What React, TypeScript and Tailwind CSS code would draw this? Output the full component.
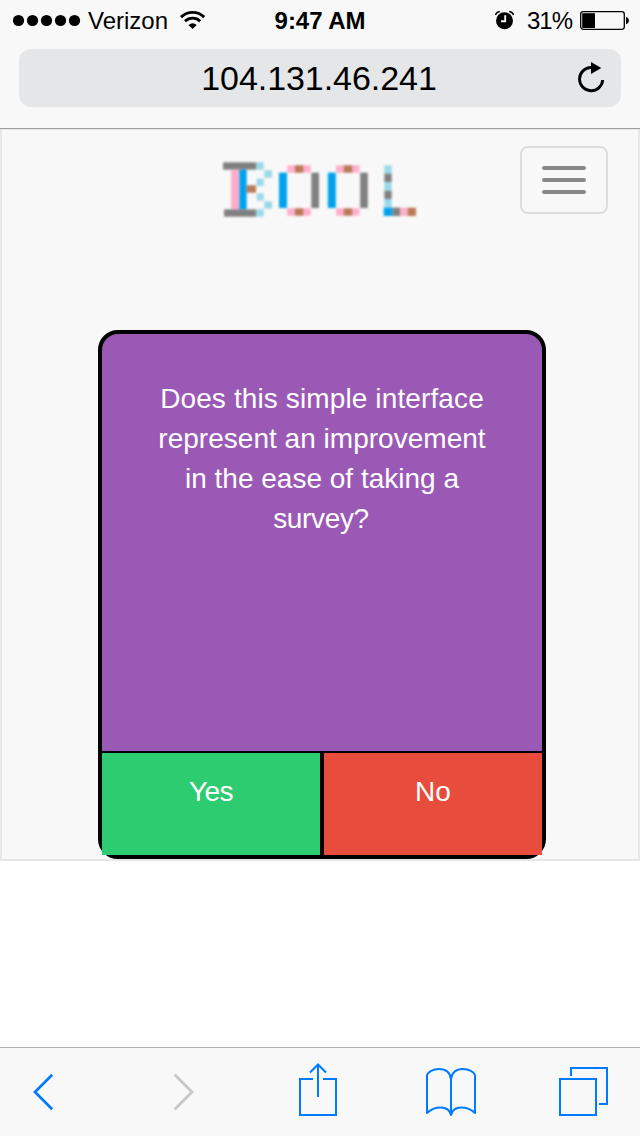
import React from 'react';

const GRAY = '#808080';
const PINK = '#ffaecb';
const BLUE = '#00a2ed';
const SKY = '#99d9ea';
const BROWN = '#b97a57';

type Block = [number, number, number, number, string];

const letterO = (x: number): Block[] => [
  [x, 68, 24, 106, BLUE],
  [x + 97, 68, 23, 106, GRAY],
  [x + 25, 46, 70, 22, PINK],
  [x + 48, 46, 25, 22, BROWN],
  [x + 25, 175, 70, 22, PINK],
  [x + 48, 175, 25, 22, BROWN],
];

const logoBlocks: Block[] = [
  [39, 37, 100, 22, GRAY],
  [139, 37, 22, 22, SKY],
  [63, 59, 25, 119, PINK],
  [88, 59, 22, 119, BLUE],
  [110, 106, 28, 22, BROWN],
  [163, 61, 23, 22, SKY],
  [140, 86, 21, 22, SKY],
  [140, 130, 21, 22, SKY],
  [163, 154, 23, 22, SKY],
  [42, 178, 97, 22, GRAY],
  [139, 178, 22, 22, SKY],
  ...letterO(207),
  ...letterO(353.5),
  [523, 46, 22, 25, SKY],
  [523, 71, 22, 25, GRAY],
  [523, 96, 22, 26, SKY],
  [523, 122, 22, 25, GRAY],
  [523, 147, 22, 26, SKY],
  [521, 173, 26, 25, BLUE],
  [547, 173, 24, 25, GRAY],
  [571, 173, 22, 25, PINK],
  [593, 173, 25, 25, BROWN],
];

function Logo() {
  return (
    <svg className="h-20 w-[220px] blur-[0.9px]" viewBox="0 0 660 240" role="img">
      {logoBlocks.map(([x, y, w, h, fill], i) => (
        <rect key={i} x={x} y={y} width={w} height={h} fill={fill} />
      ))}
    </svg>
  );
}

function StatusBar() {
  return (
    <div className="grid h-[49px] grid-cols-[240px_160px_240px] text-2xl leading-[42px]">
      <div className="flex pl-[13px]">
        <svg className="h-[42px] w-[68px] shrink-0" viewBox="0 0 68 42">
          {[5.5, 19.5, 33.5, 47.5, 61.5].map((x) => (
            <circle key={x} cx={x} cy="20.5" r="5.6" />
          ))}
        </svg>
        <span className="ml-[7px] w-[91px]">Verizon</span>
        <svg className="h-[42px] w-7 shrink-0" viewBox="0 0 28 42" fill="none" stroke="#000" strokeWidth="2.9">
          <path d="M2 17.1A16.6 16.6 0 0 1 25.2 17.1" />
          <path d="M6 21.2A11 11 0 0 1 21.2 21.2" />
          <path d="M9.5 25Q13.6 21.6 17.7 25L13.6 29Z" fill="#000" stroke="none" />
        </svg>
      </div>
      <div className="text-center font-bold tracking-[-0.05px]">9:47 AM</div>
      <div className="flex justify-end pr-[11px]">
        <svg className="h-[42px] w-5 shrink-0" viewBox="0 0 20 42">
          <circle cx="9.5" cy="20.7" r="8.5" />
          <path d="M.4 15Q1.4 12 4.8 11.5M14.2 11.5Q17.6 12 18.6 15" fill="none" stroke="#000" strokeWidth="1.4" />
          <path d="M10.2 15.2V21.2H6" fill="none" stroke="#f8f8f8" strokeWidth="1.9" />
        </svg>
        <span className="ml-3 w-[53px] whitespace-nowrap tracking-[-1px]">31%</span>
        <svg className="h-[42px] w-[49px] shrink-0" viewBox="0 0 49 42">
          <rect x=".7" y="11.7" width="43.6" height="17.6" rx="2.5" fill="none" stroke="#000" strokeWidth="1.3" />
          <rect x="2.2" y="13.2" width="12.8" height="14.8" />
          <path d="M46 16.8Q49 18 49 20.5T46 24.2Z" />
        </svg>
      </div>
    </div>
  );
}

function AddressBar() {
  return (
    <div className="mx-[19px] grid h-[58px] grid-cols-[60px_1fr_60px] items-center rounded-xl bg-[#e5e6e8]">
      <span />
      <span className="pr-[2px] text-center text-[34px] leading-[57px] tracking-[-0.05px]">104.131.46.241</span>
      <svg className="h-[58px] w-[60px]" viewBox="0 0 60 58">
        <path d="M31 18.5H30A11.6 11.6 0 1 0 41.7 31" fill="none" stroke="#000" strokeWidth="2.9" />
        <path d="M30 13L40.3 19L30 25Z" />
      </svg>
    </div>
  );
}

function Toolbar() {
  return (
    <nav className="h-[89px] border-t border-[#b2b2b2] bg-[#f8f8f8]">
      <svg className="h-[88px] w-full" viewBox="0 1048 640 88" fill="none" stroke="#007aff" strokeWidth="2">
        <path d="M52.2 1074.8L35 1092L52.2 1109.2" strokeWidth="2.7" />
        <path d="M174.8 1074.8L192 1092L174.8 1109.2" stroke="#c7c7c7" strokeWidth="2.7" />
        <path d="M313 1079H300V1115H336V1079H323M318 1097V1065M310 1072.5L318 1064.5L326 1072.5" />
        <path
          strokeLinejoin="round"
          d="M451 1115V1079C450 1072 446 1069 439 1069C433 1069 428 1072 427 1075V1113C431 1109 436 1107.5 441 1107.5C447 1107.5 450 1111 451 1115C452 1111 455 1107.5 461 1107.5C466 1107.5 471 1109 475 1113V1075C474 1072 469 1069 463 1069C456 1069 452 1072 451 1079"
        />
        <path d="M560 1079H596V1115H560ZM571 1076V1068H607V1104H599" />
      </svg>
    </nav>
  );
}

export default function App() {
  return (
    <div className="flex h-[1136px] w-[640px] flex-col overflow-hidden bg-white font-['Liberation_Sans',Arial,sans-serif] text-black">
      <header className="h-[129px] shrink-0 border-b border-[#a0a0a0] bg-[#f8f8f8]">
        <StatusBar />
        <AddressBar />
      </header>

      <main className="h-[732px] shrink-0 border-2 border-t border-[#e7e7e7] bg-[#f8f8f8]">
        <div className="flex h-[200px] items-start justify-between pr-[30px] pl-[208px]">
          <div className="pt-5">
            <Logo />
          </div>
          <button className="mt-4 flex h-[68px] w-[88px] flex-col items-center justify-center gap-2 rounded-lg border-2 border-[#ddd]" aria-label="Menu">
            <span className="h-1 w-11 rounded-xs bg-[#888]" />
            <span className="h-1 w-11 rounded-xs bg-[#888]" />
            <span className="h-1 w-11 rounded-xs bg-[#888]" />
          </button>
        </div>

        <section className="ml-24 flex h-[529px] w-[448px] flex-col rounded-[20px] border-4 border-black bg-black text-center text-[28px] leading-10 text-white">
          <div className="h-[417px] shrink-0 rounded-t-2xl bg-[#9b59b6] pt-[45px]">
            <p className="flex flex-col">
              <span className="tracking-[0.12px]">Does this simple interface</span>
              <span className="tracking-[0.02px]">represent an improvement</span>
              <span>in the ease of taking a</span>
              <span className="mr-[2px] tracking-[-0.35px]">survey?</span>
            </p>
          </div>
          <div className="mt-[2px] grid h-[102px] shrink-0 grid-cols-2 gap-1">
            <button className="flex justify-center bg-[#2ecc71] pt-[19px] tracking-[-0.5px]">Yes</button>
            <button className="flex justify-center bg-[#e74c3c] pt-[19px]">No</button>
          </div>
        </section>
      </main>

      <div className="flex-1" />
      <Toolbar />
    </div>
  );
}
